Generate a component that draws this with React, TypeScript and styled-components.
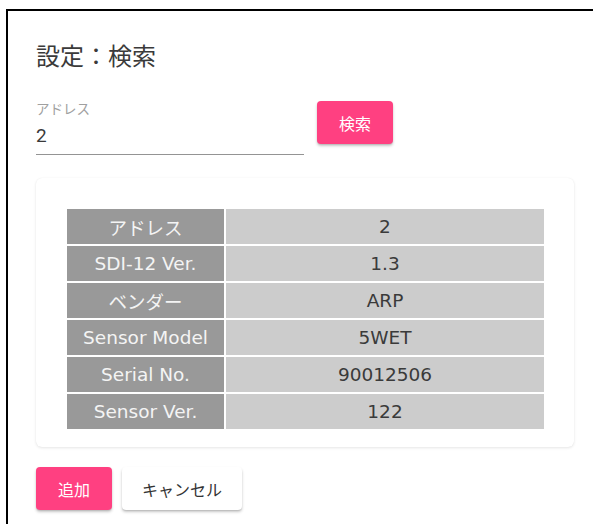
import React from 'react';
import styled, { createGlobalStyle } from 'styled-components';

const GlobalStyle = createGlobalStyle`
  html, body {
    margin: 0;
    padding: 0;
    background: #ffffff;
  }
  body {
    font-family: Roboto, 'Noto Sans CJK JP', sans-serif;
    color: #333333;
  }
`;

const Page = styled.div`
  padding: 9px 0 0 6px;
  height: 524px;
  box-sizing: border-box;
  overflow: hidden;
`;

const Frame = styled.div`
  border-top: 2px solid #000000;
  border-left: 2px solid #000000;
  background: #ffffff;
  height: 100%;
  padding: 30px 20px 0 28px;
  box-sizing: border-box;
`;

const Title = styled.h2`
  margin: 0;
  font-size: 24px;
  line-height: 32px;
  font-weight: 400;
  color: #3a3a3a;
`;

const SearchRow = styled.div`
  display: flex;
  align-items: flex-start;
  gap: 13px;
  margin-top: 28px;
`;

const Field = styled.label`
  display: flex;
  flex-direction: column;
  width: 268px;
  border-bottom: 1px solid #949494;
  padding-bottom: 6px;
`;

const FieldLabel = styled.span`
  font-size: 13.5px;
  line-height: 16px;
  color: #a0a0a0;
`;

const FieldInput = styled.input`
  border: none;
  outline: none;
  padding: 0;
  margin-top: 7px;
  font-family: Roboto, 'Noto Sans CJK JP', sans-serif;
  font-size: 19px;
  line-height: 24px;
  height: 24px;
  color: #3a3a3a;
  background: transparent;
`;

const Button = styled.button<{ $primary?: boolean; $width: number }>`
  width: ${(p) => p.$width}px;
  height: 43px;
  border: none;
  border-radius: 4px;
  font-family: Roboto, 'Noto Sans CJK JP', sans-serif;
  font-size: 16px;
  cursor: pointer;
  background: ${(p) => (p.$primary ? '#ff4081' : '#ffffff')};
  color: ${(p) => (p.$primary ? '#ffffff' : '#333333')};
  box-shadow: 0 2px 3px rgba(0, 0, 0, 0.22), 0 1px 1px rgba(0, 0, 0, 0.08);
`;

const Card = styled.div`
  margin-top: 23px;
  width: 538px;
  box-sizing: border-box;
  padding: 31px 30px 18px 31px;
  border-radius: 6px;
  background: #ffffff;
  box-shadow: 0 1px 3px rgba(0, 0, 0, 0.1), 0 0 1px rgba(0, 0, 0, 0.06);
`;

const Table = styled.table`
  width: 100%;
  border-collapse: separate;
  border-spacing: 0;
  font-family: 'DejaVu Sans', 'Noto Sans CJK JP', sans-serif;
  font-size: 18.5px;
`;

const Row = styled.tr`
  &:not(:last-child) > td {
    border-bottom: 2px solid #ffffff;
  }
`;

const HeadCell = styled.td`
  width: 157px;
  height: 35px;
  padding: 0;
  text-align: center;
  background: #999999;
  color: #f4f4f4;
  border-right: 2px solid #ffffff;
`;

const ValueCell = styled.td`
  height: 35px;
  padding: 0;
  text-align: center;
  background: #cccccc;
  color: #3a3a3a;
`;

const Actions = styled.div`
  display: flex;
  gap: 10px;
  margin-top: 20px;
`;

const rows: [string, string][] = [
  ['アドレス', '2'],
  ['SDI-12 Ver.', '1.3'],
  ['ベンダー', 'ARP'],
  ['Sensor Model', '5WET'],
  ['Serial No.', '90012506'],
  ['Sensor Ver.', '122'],
];

const App: React.FC = () => {
  const [address, setAddress] = React.useState<string>('2');

  return (
    <>
      <GlobalStyle />
      <Page>
        <Frame>
          <Title>設定：検索</Title>
          <SearchRow>
            <Field>
              <FieldLabel>アドレス</FieldLabel>
              <FieldInput
                value={address}
                onChange={(e) => setAddress(e.target.value)}
              />
            </Field>
            <Button $primary $width={76}>
              検索
            </Button>
          </SearchRow>
          <Card>
            <Table>
              <tbody>
                {rows.map(([label, value]) => (
                  <Row key={label}>
                    <HeadCell>{label}</HeadCell>
                    <ValueCell>{value}</ValueCell>
                  </Row>
                ))}
              </tbody>
            </Table>
          </Card>
          <Actions>
            <Button $primary $width={76}>
              追加
            </Button>
            <Button $width={120}>キャンセル</Button>
          </Actions>
        </Frame>
      </Page>
    </>
  );
};

export default App;
